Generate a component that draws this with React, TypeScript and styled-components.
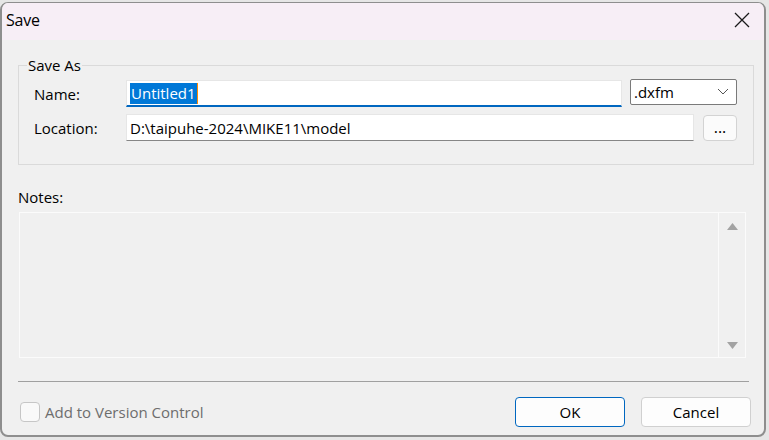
import React, { FC } from 'react';
import styled, { createGlobalStyle } from 'styled-components';

const GlobalStyle = createGlobalStyle`
  html, body {
    margin: 0;
    padding: 0;
    background: #e6e6e6;
  }
  body {
    font-family: 'Open Sans', 'Noto Sans', 'Liberation Sans', sans-serif;
    color: #000;
  }
`;

const Page = styled.div`
  width: 769px;
  height: 440px;
  padding-top: 2px;
  box-sizing: border-box;
`;

const Window = styled.div`
  width: 766px;
  height: 435px;
  box-sizing: border-box;
  border: 1px solid #8e8e8e;
  border-width: 1px 2px 2px 2px;
  border-radius: 8px;
  overflow: hidden;
  background: #f0f0f0;
  display: flex;
  flex-direction: column;
`;

const TitleBar = styled.div`
  height: 37px;
  flex: none;
  background: #f7eef6;
  display: flex;
  align-items: center;
  justify-content: space-between;
  padding: 0 14px 4px 4px;
  box-sizing: border-box;
`;

const Title = styled.span`
  font-size: 16px;
  letter-spacing: -0.2px;
`;

const CloseIcon = styled.svg`
  width: 16px;
  height: 16px;
`;

const Body = styled.div`
  flex: 1;
  display: flex;
  flex-direction: column;
  padding: 15px 10px 0 16px;
`;

const GroupBox = styled.fieldset`
  margin: 0;
  border: 1px solid #dadada;
  padding: 2px 14px 23px 15px;
  min-width: 0;
`;

const Legend = styled.legend`
  font-size: 15px;
  padding: 0 1px;
  margin-left: -7px;
`;

const FieldRow = styled.div<{ $mt?: number }>`
  display: flex;
  align-items: center;
  margin-top: ${(p) => p.$mt ?? 0}px;
`;

const Label = styled.label`
  width: 92px;
  flex: none;
  font-size: 15px;
`;

const TextBox = styled.div<{ $focused?: boolean; $width: number }>`
  width: ${(p) => p.$width}px;
  flex: none;
  height: 27px;
  box-sizing: border-box;
  background: #fff;
  border: 1px solid #e6e6e6;
  border-bottom: ${(p) => (p.$focused ? '2px solid #0067c0' : '1px solid #868686')};
  display: flex;
  align-items: center;
  padding-left: 3px;
  font-size: 15px;
`;

const Selected = styled.span`
  background: #0078d7;
  color: #fff;
  padding: 0 1px;
  line-height: 21px;
  border-right: 1px solid #ff8a00;
`;

const Select = styled.div`
  width: 107px;
  flex: none;
  height: 26px;
  box-sizing: border-box;
  margin-left: 8px;
  margin-top: -4px;
  border: 1px solid #7a7a7a;
  border-radius: 2px;
  background: #fff;
  display: flex;
  align-items: center;
  justify-content: space-between;
  padding: 0 7px 0 3px;
  font-size: 15px;
`;

const Browse = styled.div`
  width: 34px;
  flex: none;
  height: 26px;
  box-sizing: border-box;
  margin-left: 9px;
  border: 1px solid #d3d3d3;
  border-radius: 4px;
  background: #fbfbfb;
  display: flex;
  align-items: center;
  justify-content: center;
  font-size: 16px;
  padding-bottom: 2px;
`;

const NotesLabel = styled.div`
  font-size: 15px;
  margin-top: 22px;
`;

const NotesArea = styled.div`
  margin-top: 5px;
  margin-left: 1px;
  width: 727px;
  height: 146px;
  box-sizing: border-box;
  border: 1px solid #fbfbfb;
  display: flex;
  justify-content: flex-end;
`;

const ScrollBar = styled.div`
  width: 26px;
  border-left: 1px solid #fbfbfb;
  display: flex;
  flex-direction: column;
  justify-content: space-between;
  align-items: center;
  padding: 10px 0 8px;
`;

const Separator = styled.div`
  margin-top: 23px;
  width: 731px;
  height: 1px;
  background: #a0a0a0;
`;

const Footer = styled.div`
  display: flex;
  align-items: center;
  margin-top: 15px;
  margin-right: 3px;
`;

const CheckRow = styled.label`
  display: flex;
  align-items: center;
  flex: 1;
  color: #6d6d6d;
  font-size: 15px;
  margin-left: 2px;
`;

const CheckBox = styled.span`
  width: 20px;
  height: 20px;
  box-sizing: border-box;
  border: 1px solid #c6c6c6;
  border-radius: 4px;
  background: #f9f9f9;
  margin-right: 5px;
`;

const Button = styled.button<{ $primary?: boolean }>`
  width: 110px;
  height: 30px;
  box-sizing: border-box;
  margin-left: 16px;
  border: 1px solid ${(p) => (p.$primary ? '#0067c0' : '#d0d0d0')};
  border-radius: 4px;
  background: #fdfdfd;
  font-family: inherit;
  font-size: 15px;
  color: #000;
  padding: 0;
`;

const App: FC = () => {
  return (
    <Page>
      <GlobalStyle />
      <Window>
        <TitleBar>
          <Title>Save</Title>
          <CloseIcon viewBox="0 0 16 16">
            <path d="M1 1 L15 15 M15 1 L1 15" stroke="#1a1a1a" strokeWidth="1.3" fill="none" />
          </CloseIcon>
        </TitleBar>
        <Body>
          <GroupBox>
            <Legend>Save As</Legend>
            <FieldRow $mt={3}>
              <Label>Name:</Label>
              <TextBox $focused $width={496}>
                <Selected>Untitled1</Selected>
              </TextBox>
              <Select>
                <span>.dxfm</span>
                <svg width="12" height="7" viewBox="0 0 12 7">
                  <path d="M1 1 L6 6 L11 1" stroke="#555" strokeWidth="1" fill="none" />
                </svg>
              </Select>
            </FieldRow>
            <FieldRow $mt={7}>
              <Label>Location:</Label>
              <TextBox $width={568}>D:\taipuhe-2024\MIKE11\model</TextBox>
              <Browse>...</Browse>
            </FieldRow>
          </GroupBox>
          <NotesLabel>Notes:</NotesLabel>
          <NotesArea>
            <ScrollBar>
              <svg width="11" height="7" viewBox="0 0 11 7">
                <path d="M5.5 0 L11 7 L0 7 Z" fill="#a3a3a3" />
              </svg>
              <svg width="11" height="7" viewBox="0 0 11 7">
                <path d="M0 0 L11 0 L5.5 7 Z" fill="#a3a3a3" />
              </svg>
            </ScrollBar>
          </NotesArea>
          <Separator />
          <Footer>
            <CheckRow>
              <CheckBox />
              Add to Version Control
            </CheckRow>
            <Button $primary>OK</Button>
            <Button>Cancel</Button>
          </Footer>
        </Body>
      </Window>
    </Page>
  );
};

export default App;
